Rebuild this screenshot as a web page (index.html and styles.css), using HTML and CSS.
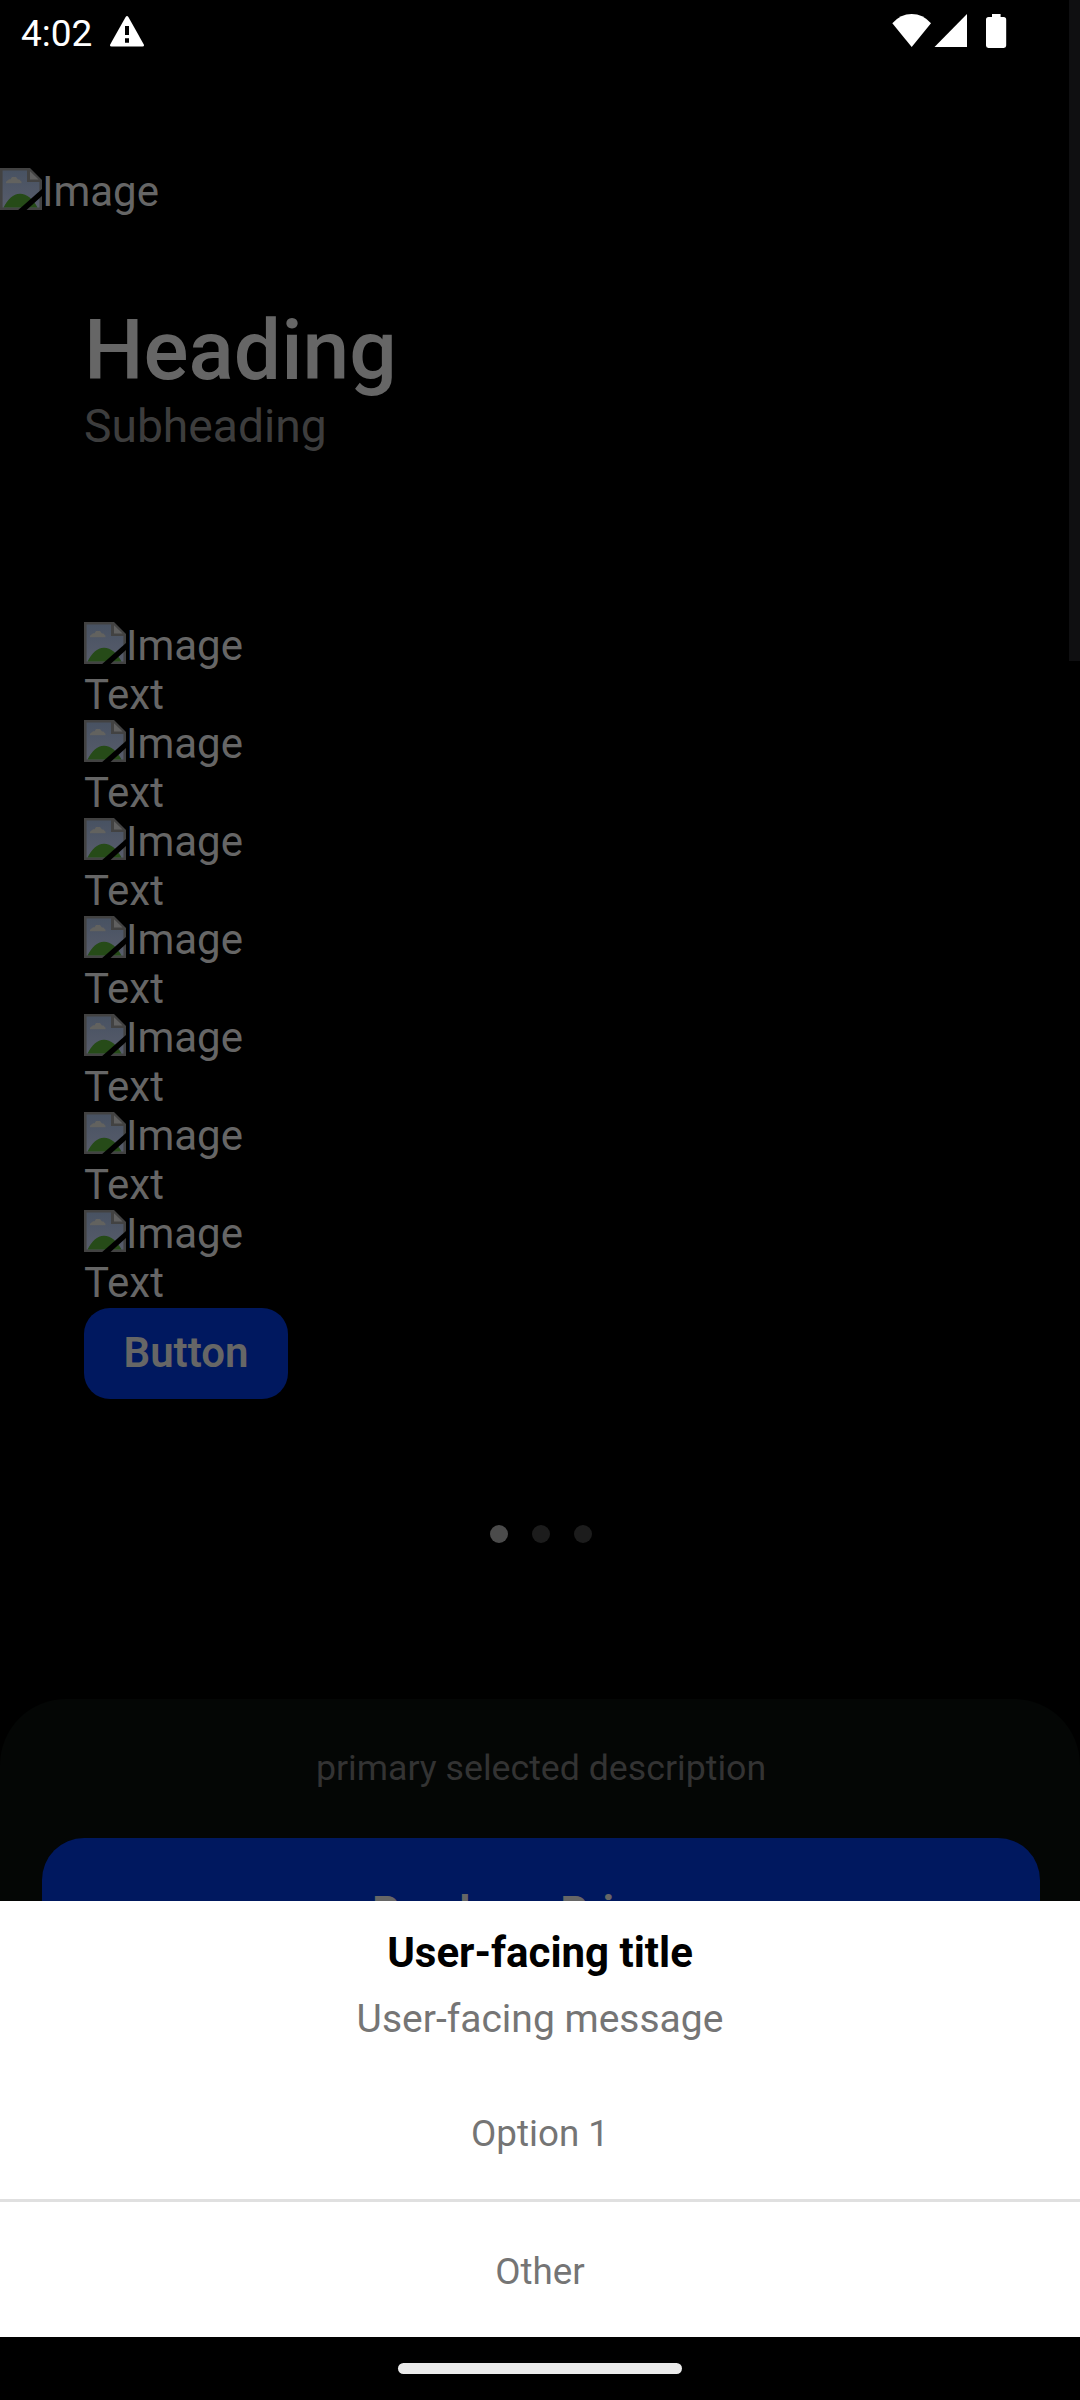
FILE: index.html
```html
<!DOCTYPE html>
<html lang="en">
<head>
<meta charset="utf-8">
<title>Paywall</title>
<link rel="stylesheet" href="styles.css">
</head>
<body>
<svg class="defs" aria-hidden="true">
  <defs>
    <linearGradient id="sky" x1="0" y1="0" x2="0" y2="1"><stop offset="0" stop-color="#485262"/><stop offset="1" stop-color="#575c6b"/></linearGradient>
    <symbol id="broken" viewBox="0 0 42 42">
      <path d="M0 0H30L42 12V42H0Z" fill="#424242"/>
      <path d="M2.600 2.600H27V14H39.400V39.400H2.600Z" fill="url(#sky)"/>
      <path d="M6 15.200V13.800L9 11.200H10.500L12 9H16L18 11.400H19.500L21.500 13.800V15.200Z" fill="#62625f"/>
      <path d="M3.500 39.600C8 31 13 25.700 20 25.700C27 25.700 33 31 37.500 39.600Z" fill="#264b18"/>
      <path d="M30 3.200L38.600 11.400H30Z" fill="#606060"/>
      <path d="M42 21V28L26.500 42H18.200Z" fill="#000"/>
    </symbol>
  </defs>
</svg>
<div class="phone">
  <div class="screen">
    <header class="status">
      <span class="clock">4:02</span>
      <svg class="alert" viewBox="0 0 36 32"><path d="M16.6 1Q18 -1 19.4 1L34.8 28.5Q35.6 30.6 33.5 30.6H2.5Q.4 30.6 1.2 28.5Z" fill="#fff"/><path d="M16 10h4v9h-4zM16 22.3h4v4.4h-4z" fill="#000"/></svg>
      <svg class="system" viewBox="0 0 116 36"><path d="M.3 9.3Q8.5 0 19.7 0T39 9.3L19.7 33Z" fill="#fff"/><path d="M75 0V33H42.5Z" fill="#fff"/><path d="M100 0h8.6v3h3q2.6 0 2.6 2.6v26q0 2.4-2.4 2.4H96.400q-2.400 0-2.400-2.400v-26q0-2.600 2.600-2.600h3.400z" fill="#fff"/></svg>
    </header>
    <div class="hero line"><svg class="pic"><use href="#broken"/></svg>Image</div>
    <main class="content">
      <h1 class="heading">Heading</h1>
      <p class="subheading">Subheading</p>
      <div class="features">
        <div class="line"><svg class="pic"><use href="#broken"/></svg>Image</div><div class="line">Text</div>
        <div class="line"><svg class="pic"><use href="#broken"/></svg>Image</div><div class="line">Text</div>
        <div class="line"><svg class="pic"><use href="#broken"/></svg>Image</div><div class="line">Text</div>
        <div class="line"><svg class="pic"><use href="#broken"/></svg>Image</div><div class="line">Text</div>
        <div class="line"><svg class="pic"><use href="#broken"/></svg>Image</div><div class="line">Text</div>
        <div class="line"><svg class="pic"><use href="#broken"/></svg>Image</div><div class="line">Text</div>
        <div class="line"><svg class="pic"><use href="#broken"/></svg>Image</div><div class="line">Text</div>
      </div>
      <button class="button">Button</button>
    </main>
    <div class="dots"><i class="dot active"></i><i class="dot"></i><i class="dot"></i></div>
    <section class="panel">
      <p class="description">primary selected description</p>
      <button class="purchase">Purchase Primary</button>
    </section>
    <div class="scrollbar"></div>
  </div>
  <section class="sheet">
    <h2 class="title">User-facing title</h2>
    <p class="message">User-facing message</p>
    <div class="option first">Option 1</div>
    <div class="option">Other</div>
  </section>
  <footer class="nav"><div class="pill"></div></footer>
</div>
</body>
</html>
```
FILE: styles.css
```css
* { box-sizing: border-box; margin: 0; padding: 0; }
body { background: #000; font-family: Roboto, "Liberation Sans", sans-serif; }
button { border: 0; font-family: inherit; }
.defs { position: absolute; width: 0; height: 0; }
.phone { display: flex; flex-direction: column; width: 1080px; height: 2400px; overflow: hidden; }
.screen { position: relative; flex: none; display: flex; flex-direction: column; height: 1901px; overflow: hidden; color: #666; }
.status { flex: none; display: flex; align-items: flex-start; height: 168px; padding: 14px 72px 0 21px; color: #fff; }
.clock { width: 88px; font-size: 37px; line-height: 39px; }
.alert { width: 36px; height: 32px; margin-top: 2px; }
.system { width: 116px; height: 36px; margin-left: auto; }
.line { display: flex; height: 49px; font-size: 42px; line-height: 49px; }
.pic { flex: none; width: 42px; height: 42px; margin-top: 1px; }
.hero { flex: none; height: 49px; margin-top: -1px; }
.content { flex: none; padding: 86px 84px 0; }
.heading { height: 97px; font-size: 84px; line-height: 98px; font-weight: 500; }
.subheading { font-size: 46.2px; line-height: 54px; color: #3d3d3d; }
.features { margin-top: 168px; }
.button { display: block; width: 204px; height: 91px; margin-top: 1px; padding-bottom: 2px; border-radius: 26px; background: #00185f; color: #666; font-size: 42px; font-weight: 600; }
.dots { flex: none; display: flex; justify-content: center; gap: 24px; margin-top: 126px; padding-left: 2px; }
.dot { width: 18px; height: 18px; border-radius: 50%; background: #1c1c1c; }
.dot.active { background: #4b4b4b; }
.panel { flex: none; height: 300px; margin-top: 156px; padding: 47px 40px 0 42px; border-radius: 66px 66px 0 0; background: #040605; text-align: center; }
.description { font-size: 35.7px; line-height: 44px; color: #333; }
.purchase { display: block; width: 998px; height: 147px; margin-top: 48px; border-radius: 42px; background: #00185f; color: #666; font-size: 42px; font-weight: 700; }
.scrollbar { position: absolute; top: 0; right: 0; width: 11px; height: 661px; background: #0f0f11; }
.sheet { flex: none; height: 436px; background: #fff; text-align: center; color: #757575; }
.title { padding-top: 27px; font-size: 42px; line-height: 50px; font-weight: 700; color: #000; }
.message { margin-top: 18px; font-size: 39px; line-height: 46px; }
.option { font-size: 36.75px; line-height: 139px; height: 135px; }
.first { height: 160px; padding-top: 22px; border-bottom: 3px solid #e0e0e0; }
.nav { flex: none; display: flex; justify-content: center; height: 63px; padding-top: 26px; background: #000; }
.pill { width: 284px; height: 11px; border-radius: 6px; background: #ebebeb; }
```
